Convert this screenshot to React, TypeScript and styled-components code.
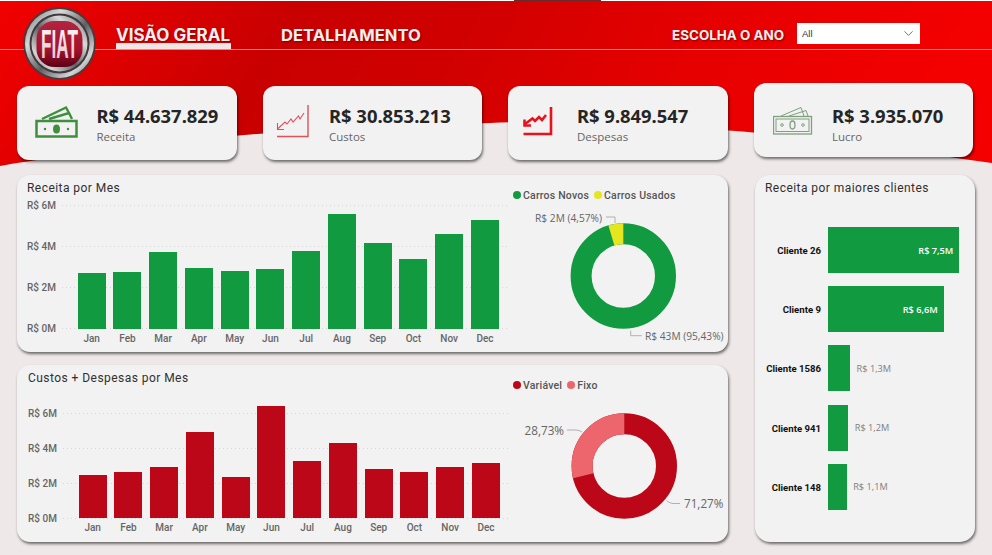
import { ReactNode } from "react";
import styled, { createGlobalStyle } from "styled-components";
import { ChevronDown } from "lucide-react";

const GlobalStyle = createGlobalStyle`
  html, body {
    margin: 0;
    padding: 0;
    overflow: hidden;
    background: #efe8e8;
  }
`;

const Root = styled.div`
  position: relative;
  width: 992px;
  height: 555px;
  overflow: hidden;
  background: #efe8e8;
  font-family: "Open Sans", sans-serif;
`;

const Wave = styled.svg`
  position: absolute;
  top: 0;
  left: 0;
`;

const TopStrip = styled.div`
  position: relative;
  height: 1px;
  background: #ffffff;
  padding-left: 514px;
`;

const TopStripMark = styled.div`
  width: 87px;
  height: 1px;
  background: #6b2a2a;
`;

const Header = styled.header`
  position: relative;
  display: flex;
  align-items: flex-end;
  height: 48px;
  padding: 0 72px 0 116px;
  border-bottom: 1px solid rgba(255, 220, 220, 0.6);
`;

const LogoMark = styled.svg`
  position: absolute;
  left: 22px;
  top: 5px;
`;

const NavItem = styled.div<{ $active?: boolean }>`
  width: ${({ $active }) => ($active ? "115px" : "auto")};
  margin-right: 50px;
  padding-bottom: ${({ $active }) => ($active ? "0" : "6px")};
  font-family: Inter, sans-serif;
  font-size: ${({ $active }) => ($active ? "17px" : "16.6px")};
  font-weight: 700;
  line-height: 16px;
  white-space: nowrap;
  color: #f7efef;
  text-shadow: 1px 1px 2px rgba(60, 0, 0, 0.55);
  border-bottom: ${({ $active }) => ($active ? "6px solid #f1e6e6" : "0")};
`;

const YearFilter = styled.div`
  display: flex;
  align-items: flex-start;
  gap: 13px;
  margin-left: auto;
  align-self: flex-start;
  margin-top: 22px;
`;

const YearLabel = styled.span`
  padding-top: 4px;
  font-family: Inter, sans-serif;
  font-size: 13.4px;
  font-weight: 700;
  line-height: 16px;
  color: #f7efef;
  white-space: nowrap;
  text-shadow: 1px 1px 2px rgba(60, 0, 0, 0.55);
`;

const YearSelect = styled.div`
  display: flex;
  align-items: center;
  justify-content: space-between;
  box-sizing: border-box;
  width: 123px;
  height: 21px;
  padding: 0 4px 0 5px;
  background: #ffffff;
  color: #333333;
  font-family: "Liberation Sans", sans-serif;
  font-size: 9.5px;
`;

const KpiRow = styled.section`
  position: relative;
  display: flex;
  align-items: flex-start;
  gap: 26px;
  padding: 36px 0 0 17px;
`;

const KpiCard = styled.div<{ $raised?: boolean }>`
  display: flex;
  align-items: center;
  box-sizing: border-box;
  width: 219.5px;
  height: 74px;
  margin-top: ${({ $raised }) => ($raised ? "-3px" : "0")};
  padding-top: ${({ $raised }) => ($raised ? "6px" : "0")};
  background: #f2f2f2;
  border-radius: 12px;
  box-shadow: 1px 2px 3px rgba(0, 0, 0, 0.55);
`;

const KpiIcon = styled.div<{ $width: number }>`
  display: flex;
  justify-content: flex-end;
  width: ${({ $width }) => $width}px;
  margin-bottom: 4px;
  flex: none;
`;

const KpiText = styled.div<{ $gap: number }>`
  margin-left: ${({ $gap }) => $gap}px;
  padding-top: 2px;
`;

const KpiValue = styled.div`
  font-family: "Noto Sans", sans-serif;
  font-size: 18.4px;
  font-weight: 700;
  line-height: 24px;
  color: #252525;
  white-space: nowrap;
`;

const KpiLabel = styled.div`
  margin-top: 1px;
  font-family: "Open Sans", sans-serif;
  font-size: 11.5px;
  line-height: 15px;
  color: #666666;
`;

const Main = styled.main`
  position: relative;
  display: grid;
  grid-template-columns: 711px 220px;
  column-gap: 27px;
  margin: 15px 0 0 17px;
`;

const LeftColumn = styled.div`
  display: flex;
  flex-direction: column;
  gap: 13px;
`;

const Panel = styled.section`
  display: flex;
  height: 177px;
  background: #f2f2f2;
  border-radius: 13px;
  box-shadow: 1px 2px 3px rgba(0, 0, 0, 0.55);
`;

const ChartColumn = styled.div<{ $inset: number }>`
  box-sizing: border-box;
  width: 493px;
  padding: 5px 0 0 ${({ $inset }) => $inset}px;
`;

const Title = styled.h2`
  margin: 0;
  font-family: Roboto, sans-serif;
  font-size: 12px;
  font-weight: 400;
  line-height: 16px;
  letter-spacing: 0.45px;
  color: #303030;
  white-space: nowrap;
`;

const Plot = styled.div<{ $top: number; $height: number }>`
  position: relative;
  height: ${({ $height }) => $height}px;
  margin-top: ${({ $top }) => $top}px;
`;

const GridLayer = styled.div`
  position: absolute;
  inset: 0;
  display: flex;
  flex-direction: column;
  justify-content: space-between;
`;

const GridRow = styled.div`
  display: flex;
  align-items: center;
  gap: 6px;
  height: 0;
`;

const AxisLabel = styled.span`
  width: 29px;
  font-family: Roboto, sans-serif;
  font-size: 10px;
  font-weight: 500;
  color: #666666;
  white-space: nowrap;
`;

const GridLine = styled.div`
  flex: 1;
  height: 1px;
  background: repeating-linear-gradient(to right, #d6d6d6 0 1px, transparent 1px 4px);
`;

const Bars = styled.div`
  position: relative;
  display: flex;
  align-items: flex-end;
  gap: 7.75px;
  height: 100%;
  margin-left: 50.7px;
`;

const Bar = styled.div<{ $color: string }>`
  width: 28px;
  flex: none;
  background: ${({ $color }) => $color};
`;

const Months = styled.div`
  display: flex;
  gap: 7.75px;
  margin: 3px 0 0 50.7px;
`;

const Month = styled.span`
  width: 28px;
  flex: none;
  text-align: center;
  font-family: Roboto, sans-serif;
  font-size: 10px;
  font-weight: 500;
  line-height: 14px;
  color: #666666;
`;

const DonutColumn = styled.div`
  flex: 1;
  padding-top: 13px;
`;

const Legend = styled.div`
  display: flex;
  align-items: center;
  height: 14px;
  padding-left: 3px;
  gap: 5px;
`;

const LegendItem = styled.span`
  display: flex;
  align-items: center;
  gap: 2px;
  font-family: Roboto, sans-serif;
  font-size: 10.5px;
  font-weight: 500;
  letter-spacing: 0.2px;
  color: #555555;
  white-space: nowrap;
`;

const LegendDot = styled.i<{ $color: string }>`
  width: 8px;
  height: 8px;
  border-radius: 50%;
  background: ${({ $color }) => $color};
`;

const DonutSvg = styled.svg`
  display: block;
`;

const DonutText = styled.text<{ $size: number }>`
  font-family: "Open Sans", sans-serif;
  font-size: ${({ $size }) => $size}px;
  fill: #666666;
`;

const ClientPanel = styled.aside`
  box-sizing: border-box;
  height: 367px;
  padding: 5px 0 0 10px;
  background: #f2f2f2;
  border-radius: 15px;
  box-shadow: 1px 2px 3px rgba(0, 0, 0, 0.55);
`;

const ClientList = styled.div`
  display: flex;
  flex-direction: column;
  gap: 13.2px;
  margin: 31px 0 0 -10px;
`;

const ClientRow = styled.div`
  display: flex;
  align-items: center;
  height: 46px;
`;

const ClientName = styled.span`
  width: 66px;
  margin-right: 6.7px;
  padding-top: 1px;
  flex: none;
  text-align: right;
  font-family: Roboto, sans-serif;
  font-size: 9.6px;
  font-weight: 700;
  color: #111111;
  white-space: nowrap;
`;

const ClientBar = styled.div`
  display: flex;
  align-items: center;
  justify-content: flex-end;
  box-sizing: border-box;
  height: 46px;
  flex: none;
  padding-right: 6px;
  background: #129a41;
`;

const ClientValue = styled.span<{ $inside?: boolean }>`
  margin-left: ${({ $inside }) => ($inside ? "0" : "6.5px")};
  font-family: "Open Sans", sans-serif;
  font-size: 9.2px;
  font-weight: ${({ $inside }) => ($inside ? 600 : 400)};
  color: ${({ $inside }) => ($inside ? "#ffffff" : "#808080")};
  white-space: nowrap;
`;

const MONTHS = ["Jan", "Feb", "Mar", "Apr", "May", "Jun", "Jul", "Aug", "Sep", "Oct", "Nov", "Dec"];
const AXIS = ["R$ 6M", "R$ 4M", "R$ 2M", "R$ 0M"];
const REVENUE = [2.7, 2.75, 3.72, 2.93, 2.83, 2.88, 3.76, 5.57, 4.15, 3.37, 4.59, 5.28];
const COSTS = [2.43, 2.65, 2.89, 4.93, 2.32, 6.42, 3.27, 4.3, 2.82, 2.65, 2.93, 3.16];

const GREEN = "#129a41";
const RED = "#bb0717";

const CLIENTS = [
  { name: "Cliente 26", value: "R$ 7,5M", width: 131.6, inside: true },
  { name: "Cliente 9", value: "R$ 6,6M", width: 116, inside: true },
  { name: "Cliente 1586", value: "R$ 1,3M", width: 22.4, inside: false },
  { name: "Cliente 941", value: "R$ 1,2M", width: 20.6, inside: false },
  { name: "Cliente 148", value: "R$ 1,1M", width: 19, inside: false },
];

const FiatLogo = () => (
  <LogoMark width="76" height="76" viewBox="0 0 76 76">
    <defs>
      <linearGradient id="chrome" x1="0" y1="0" x2="1" y2="1">
        <stop offset="0" stopColor="#6d6d70" />
        <stop offset="0.28" stopColor="#d9d9d9" />
        <stop offset="0.55" stopColor="#5f5f63" />
        <stop offset="0.8" stopColor="#d5d5d5" />
        <stop offset="1" stopColor="#55555a" />
      </linearGradient>
      <linearGradient id="shield" x1="0" y1="0" x2="0" y2="1">
        <stop offset="0" stopColor="#b3223f" />
        <stop offset="0.6" stopColor="#a5142e" />
        <stop offset="1" stopColor="#5c0016" />
      </linearGradient>
      <linearGradient id="letters" x1="0" y1="0" x2="0" y2="1">
        <stop offset="0" stopColor="#ffffff" />
        <stop offset="1" stopColor="#e2b8c0" />
      </linearGradient>
    </defs>
    <circle cx="37.5" cy="37.5" r="36.5" fill="#4a3a3e" />
    <circle cx="37.5" cy="37.5" r="34.5" fill="url(#chrome)" />
    <circle cx="37.5" cy="37.5" r="30" fill="#3d3a3c" />
    <circle cx="37.5" cy="37.5" r="28" fill="url(#chrome)" transform="rotate(90 37.5 37.5)" />
    <rect x="14.5" y="15" width="46" height="46" rx="18" fill="url(#shield)" />
    <text
      transform="translate(37.5 52) scale(0.43 1)"
      textAnchor="middle"
      fontFamily="Liberation Sans, sans-serif"
      fontWeight="700"
      fontSize="40"
      fill="url(#letters)"
    >
      FIAT
    </text>
  </LogoMark>
);

const MoneyIcon = () => (
  <svg width="43" height="33" viewBox="0 0 43 33" fill="none" stroke="#3f8f3f" strokeWidth="2.4">
    <path d="M7 14 L31 2.5 L33.5 7" />
    <path d="M14 14 L34 8 L37 14" />
    <rect x="1.5" y="16" width="40" height="15.5" strokeWidth="2.5" />
    <ellipse cx="21.5" cy="24" rx="3.5" ry="4.5" fill="#3f8f3f" stroke="none" />
    <circle cx="10" cy="24" r="1.2" fill="#3f8f3f" stroke="none" />
    <circle cx="33" cy="24" r="1.2" fill="#3f8f3f" stroke="none" />
  </svg>
);

const ThinChartIcon = () => (
  <svg width="34" height="33" viewBox="0 0 34 33" fill="none" stroke="#e2505a" strokeWidth="1.1">
    <path d="M32 0 V31.5 H1" strokeWidth="1.4" />
    <path d="M28 8 L24 14 L22.5 11 L17 17 L15 14 L11 19 L9 17 L1.5 24" />
    <path d="M1.5 18 V24.5 H8" />
  </svg>
);

const BoldChartIcon = () => (
  <svg width="30" height="29" viewBox="0 0 30 29" fill="none" stroke="#e8121e">
    <path d="M28 0 V27 H0.5" strokeWidth="2.6" />
    <path d="M23 8 L19 13 L16 10 L12 14 L9.5 11.5 L2 17" strokeWidth="2.6" />
    <path d="M1.5 12.5 V18.5 H8" strokeWidth="2.6" />
  </svg>
);

const OutlineMoneyIcon = () => (
  <svg width="40" height="28" viewBox="0 0 40 28" fill="none" stroke="#7f9f7f">
    <path d="M8 9 L28 0.5 L31 9" />
    <path d="M16 9 L33 3.5 L35 9" />
    <rect x="0.5" y="9.5" width="38" height="17.5" strokeWidth="1.3" />
    <rect x="3" y="12" width="33" height="12.5" />
    <ellipse cx="19.5" cy="18" rx="2.5" ry="4" strokeWidth="1.3" />
    <circle cx="9" cy="18" r="1.3" />
    <circle cx="30" cy="18" r="1.3" />
  </svg>
);

type MonthlyChartProps = {
  title: string;
  values: number[];
  color: string;
  inset: number;
  top: number;
  pxPerMillion: number;
};

const MonthlyChart = ({ title, values, color, inset, top, pxPerMillion }: MonthlyChartProps) => (
  <ChartColumn $inset={inset}>
    <Title>{title}</Title>
    <Plot $top={top} $height={pxPerMillion * 6}>
      <GridLayer>
        {AXIS.map((label) => (
          <GridRow key={label}>
            <AxisLabel>{label}</AxisLabel>
            <GridLine />
          </GridRow>
        ))}
      </GridLayer>
      <Bars>
        {values.map((value, i) => (
          <Bar key={MONTHS[i]} $color={color} style={{ height: value * pxPerMillion }} />
        ))}
      </Bars>
    </Plot>
    <Months>
      {MONTHS.map((month) => (
        <Month key={month}>{month}</Month>
      ))}
    </Months>
  </ChartColumn>
);

type DonutProps = {
  cx: number;
  base: string;
  slice: { share: number; start: number; color: string };
  children: ReactNode;
};

const Donut = ({ cx, base, slice, children }: DonutProps) => {
  const cy = 74;
  return (
    <DonutSvg width="218" height="150" viewBox="0 0 218 150">
      <g fill="none" strokeWidth="21" transform={`rotate(-90 ${cx} ${cy})`}>
        <circle cx={cx} cy={cy} r="42.2" stroke={base} />
        <circle
          cx={cx}
          cy={cy}
          r="42.2"
          stroke={slice.color}
          pathLength={100}
          strokeDasharray={`${slice.share} 100`}
          strokeDashoffset={-slice.start}
        />
      </g>
      {children}
    </DonutSvg>
  );
};

const App = () => (
  <Root>
    <GlobalStyle />
    <Wave width="992" height="170" viewBox="0 0 992 170">
      <defs>
        <linearGradient id="redWave" x1="0" y1="0" x2="1" y2="0.1">
          <stop offset="0" stopColor="#f20000" />
          <stop offset="0.3" stopColor="#c90000" />
          <stop offset="0.5" stopColor="#d20000" />
          <stop offset="0.72" stopColor="#e60000" />
          <stop offset="1" stopColor="#f40000" />
        </linearGradient>
      </defs>
      <path
        d="M0 0 H992 V163 C900 150 800 135 722 130 C650 125 560 120 490 123 C380 127 250 130 130 148 C80 155 30 160 0 166 Z"
        fill="url(#redWave)"
      />
    </Wave>
    <TopStrip>
      <TopStripMark />
    </TopStrip>
    <Header>
      <FiatLogo />
      <NavItem $active>VISÃO GERAL</NavItem>
      <NavItem>DETALHAMENTO</NavItem>
      <YearFilter>
        <YearLabel>ESCOLHA O ANO</YearLabel>
        <YearSelect>
          All
          <ChevronDown size={15} strokeWidth={1.1} color="#333333" />
        </YearSelect>
      </YearFilter>
    </Header>
    <KpiRow>
      <KpiCard>
        <KpiIcon $width={61}>
          <MoneyIcon />
        </KpiIcon>
        <KpiText $gap={18.5}>
          <KpiValue>R$ 44.637.829</KpiValue>
          <KpiLabel>Receita</KpiLabel>
        </KpiText>
      </KpiCard>
      <KpiCard>
        <KpiIcon $width={47}>
          <ThinChartIcon />
        </KpiIcon>
        <KpiText $gap={19.5}>
          <KpiValue>R$ 30.853.213</KpiValue>
          <KpiLabel>Custos</KpiLabel>
        </KpiText>
      </KpiCard>
      <KpiCard>
        <KpiIcon $width={45}>
          <BoldChartIcon />
        </KpiIcon>
        <KpiText $gap={24}>
          <KpiValue>R$ 9.849.547</KpiValue>
          <KpiLabel>Despesas</KpiLabel>
        </KpiText>
      </KpiCard>
      <KpiCard $raised>
        <KpiIcon $width={59}>
          <OutlineMoneyIcon />
        </KpiIcon>
        <KpiText $gap={19.5}>
          <KpiValue>R$ 3.935.070</KpiValue>
          <KpiLabel>Lucro</KpiLabel>
        </KpiText>
      </KpiCard>
    </KpiRow>
    <Main>
      <LeftColumn>
        <Panel>
          <MonthlyChart title="Receita por Mes" values={REVENUE} color={GREEN} inset={10} top={9.5} pxPerMillion={20.5} />
          <DonutColumn>
            <Legend>
              <LegendItem>
                <LegendDot $color={GREEN} />
                Carros Novos
              </LegendItem>
              <LegendItem>
                <LegendDot $color="#e6e620" />
                Carros Usados
              </LegendItem>
            </Legend>
            <Donut cx={113.3} base={GREEN} slice={{ share: 4.57, start: 95.43, color: "#e6e620" }}>
              <path d="M96 15 H105 V21" fill="none" stroke="#b0b0b0" />
              <DonutText $size={10.2} x="92" y="19.5" textAnchor="end">R$ 2M (4,57%)</DonutText>
              <path d="M120.7 128.7 V133.7 H131.7" fill="none" stroke="#b0b0b0" />
              <DonutText $size={10.2} x="135" y="137.5">R$ 43M (95,43%)</DonutText>
            </Donut>
          </DonutColumn>
        </Panel>
        <Panel>
          <MonthlyChart title="Custos + Despesas por Mes" values={COSTS} color={RED} inset={11} top={27} pxPerMillion={17.5} />
          <DonutColumn>
            <Legend>
              <LegendItem>
                <LegendDot $color={RED} />
                Variável
              </LegendItem>
              <LegendItem>
                <LegendDot $color="#ee666d" />
                Fixo
              </LegendItem>
            </Legend>
            <Donut cx={114.3} base={RED} slice={{ share: 28.73, start: 71.27, color: "#ee666d" }}>
              <path d="M57 38 H66 Q69 38 72 40" fill="none" stroke="#b0b0b0" />
              <DonutText $size={11.7} x="54" y="42.5" textAnchor="end">28,73%</DonutText>
              <path d="M156.7 108.7 Q160 111.5 163 111.5 H170" fill="none" stroke="#b0b0b0" />
              <DonutText $size={11.7} x="174" y="116">71,27%</DonutText>
            </Donut>
          </DonutColumn>
        </Panel>
      </LeftColumn>
      <ClientPanel>
        <Title>Receita por maiores clientes</Title>
        <ClientList>
          {CLIENTS.map((client) => (
            <ClientRow key={client.name}>
              <ClientName>{client.name}</ClientName>
              <ClientBar style={{ width: client.width }}>
                {client.inside && <ClientValue $inside>{client.value}</ClientValue>}
              </ClientBar>
              {!client.inside && <ClientValue>{client.value}</ClientValue>}
            </ClientRow>
          ))}
        </ClientList>
      </ClientPanel>
    </Main>
  </Root>
);

export default App;
